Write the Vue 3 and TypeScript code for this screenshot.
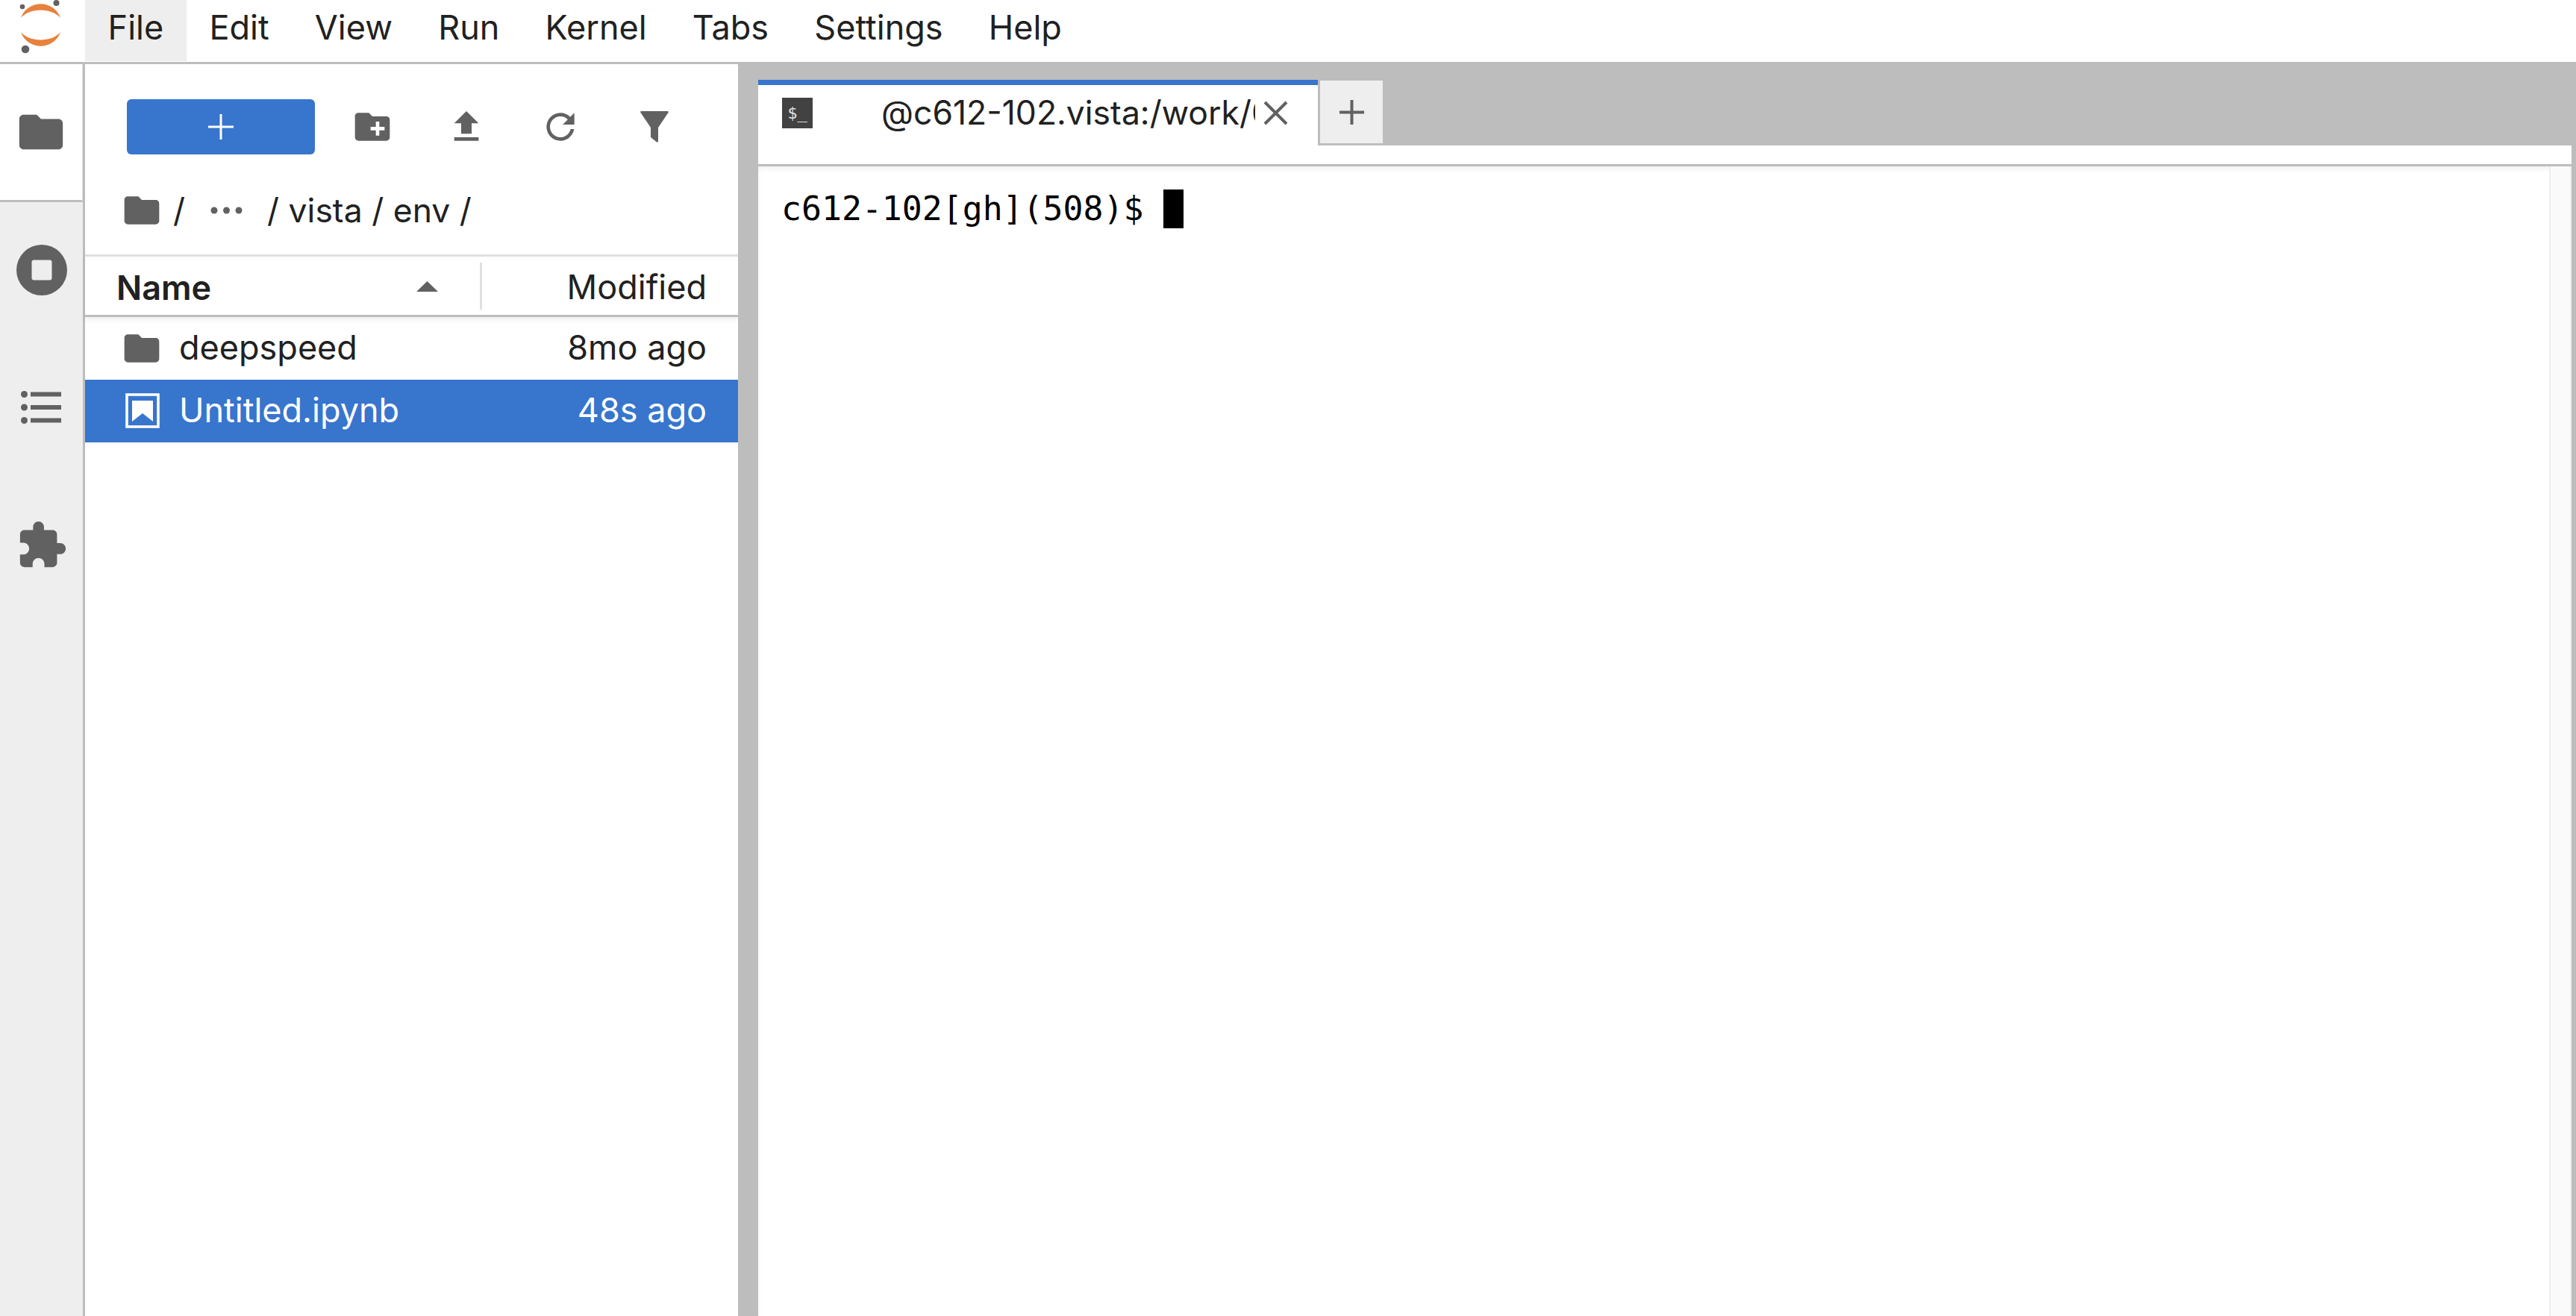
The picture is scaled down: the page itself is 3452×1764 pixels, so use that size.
<script setup lang="ts">
const menus: string[] = ['File', 'Edit', 'View', 'Run', 'Kernel', 'Tabs', 'Settings', 'Help']
const folderPath = 'M10 4H4c-1.100 0-2 .9-2 2v12c0 1.100.9 2 2 2h16c1.100 0 2-.9 2-2V8c0-1.100-.9-2-2-2h-8l-2-2z'
</script>

<template>
  <div class="app">
    <header class="topbar">
      <div class="logo">
        <svg width="64" height="76" viewBox="0 0 64 76">
          <circle cx="7" cy="9" r="3.300" fill="#616161" />
          <circle cx="52.500" cy="4" r="4" fill="#616161" />
          <circle cx="11" cy="66" r="5.300" fill="#616161" />
          <path d="M5 24C14-1 49-1 58 24 46 10 17 10 5 24Z" fill="#e8813c" />
          <path d="M5 43C14 68 49 68 58 43 46 57 17 57 5 43Z" fill="#e8813c" />
        </svg>
      </div>
      <nav class="menu">
        <div v-for="(m, i) in menus" :key="m" class="menu-item" :class="{ active: i === 0 }">{{ m }}</div>
      </nav>
    </header>

    <div class="main">
      <aside class="rail">
        <div class="rail-tab current">
          <svg width="70" height="70" viewBox="0 0 24 24"><path :d="folderPath" fill="#616161" /></svg>
        </div>
        <div class="rail-tab stop">
          <svg width="68" height="68" viewBox="0 0 68 68">
            <circle cx="34" cy="34" r="34" fill="#616161" />
            <rect x="20.500" y="20.500" width="27" height="27" rx="3" fill="#eeeeee" />
          </svg>
        </div>
        <div class="rail-tab">
          <svg width="56" height="44" viewBox="0 0 56 44">
            <circle cx="4.500" cy="4.500" r="4.500" fill="#616161" /><rect x="13" y="1.500" width="41" height="6" fill="#616161" />
            <circle cx="4.500" cy="22" r="4.500" fill="#616161" /><rect x="13" y="19" width="41" height="6" fill="#616161" />
            <circle cx="4.500" cy="39.500" r="4.500" fill="#616161" /><rect x="13" y="36.500" width="41" height="6" fill="#616161" />
          </svg>
        </div>
        <div class="rail-tab puzzle">
          <svg width="70" height="70" viewBox="0 0 24 24"><path d="M20.500 11H19V7c0-1.100-.9-2-2-2h-4V3.500C13 2.120 11.880 1 10.500 1S8 2.120 8 3.500V5H4c-1.100 0-1.990.9-1.990 2v3.800H3.500c1.490 0 2.700 1.210 2.700 2.700s-1.210 2.700-2.700 2.700H2V20c0 1.100.9 2 2 2h3.800v-1.500c0-1.490 1.210-2.700 2.700-2.700 1.490 0 2.700 1.210 2.700 2.700V22H17c1.100 0 2-.9 2-2v-4h1.500c1.380 0 2.500-1.120 2.500-2.500S21.880 11 20.500 11z" fill="#616161" /></svg>
        </div>
      </aside>

      <section class="browser">
        <div class="toolbar">
          <div class="new-btn">
            <svg width="34" height="34" viewBox="0 0 34 34"><path d="M15.500 0h3v15.500H34v3H18.500V34h-3V18.500H0v-3h15.500z" fill="#fff" /></svg>
          </div>
          <div class="tools">
            <svg width="56" height="56" viewBox="0 0 24 24"><path d="M20 6h-8l-2-2H4c-1.110 0-2 .89-2 2v12c0 1.110.89 2 2 2h16c1.110 0 2-.89 2-2V8c0-1.110-.89-2-2-2zm-1 8h-3v3h-2v-3h-3v-2h3V9h2v3h3v2z" fill="#616161" /></svg>
            <svg width="56" height="56" viewBox="0 0 24 24"><path d="M9 16h6v-6h4l-7-7-7 7h4zm-4 2h14v2H5z" fill="#616161" /></svg>
            <svg width="56" height="56" viewBox="0 0 18 18"><path d="M9 13.500c-2.490 0-4.500-2.010-4.500-4.500S6.510 4.500 9 4.500c1.240 0 2.360.52 3.170 1.330L10 8h5V3l-1.760 1.760C12.150 3.680 10.660 3 9 3 5.690 3 3.010 5.690 3.010 9S5.690 15 9 15c2.970 0 5.430-2.160 5.910-5h-1.520c-.46 2-2.240 3.500-4.390 3.500z" fill="#616161" /></svg>
            <svg width="56" height="56" viewBox="-9 -7 56 56"><path d="M1.500 0H36.500Q38.500 0 37.500 2L24 22V40Q24 43 21.500 41L14 35V22L.5 2Q-.5 0 1.500 0Z" fill="#616161" /></svg>
          </div>
        </div>

        <div class="crumbs">
          <svg width="56" height="56" viewBox="0 0 24 24"><path :d="folderPath" fill="#616161" /></svg>
          <span class="crumb first">/</span>
          <svg class="dots" width="44" height="10" viewBox="0 0 44 10">
            <circle cx="5" cy="5" r="4.500" fill="#616161" /><circle cx="21.500" cy="5" r="4.500" fill="#616161" /><circle cx="38" cy="5" r="4.500" fill="#616161" />
          </svg>
          <span class="crumb">/ vista / env /</span>
        </div>

        <div class="list-head">
          <div class="col-name">
            <span>Name</span>
            <svg width="29" height="14" viewBox="0 0 29 14"><path d="M14.500 0 29 14H0z" fill="#616161" /></svg>
          </div>
          <div class="col-mod">Modified</div>
        </div>

        <div class="row">
          <svg width="56" height="56" viewBox="0 0 24 24"><path :d="folderPath" fill="#616161" /></svg>
          <span class="fname">deepspeed</span>
          <span class="when">8mo ago</span>
        </div>
        <div class="row selected">
          <svg width="56" height="56" viewBox="0 0 56 56">
            <rect x="8" y="6" width="42" height="43" fill="none" stroke="#fff" stroke-width="3.600" />
            <path d="M15 14H43V42L29 31 15 42Z" fill="#fff" />
          </svg>
          <span class="fname">Untitled.ipynb</span>
          <span class="when">48s ago</span>
        </div>
      </section>

      <section class="dock">
        <div class="tabbar">
          <div class="tab">
            <div class="term-icon">$_</div>
            <span class="tab-title">@c612-102.vista:/work/09</span>
            <svg class="tab-close" width="33" height="33" viewBox="0 0 33 33"><path d="M2 2 31 31M31 2 2 31" stroke="#616161" stroke-width="4" fill="none" /></svg>
          </div>
          <div class="add-tab">
            <svg width="33" height="33" viewBox="0 0 33 33"><path d="M14.500 0h4v14.500H33v4H18.500V33h-4V18.500H0v-4h14.500z" fill="#616161" /></svg>
          </div>
        </div>
        <div class="strip"></div>
        <div class="terminal">
          <div class="term-body">
            <span class="prompt">c612-102[gh](508)$ </span><span class="cursor"></span>
          </div>
          <div class="scrollbar"></div>
        </div>
      </section>
    </div>
  </div>
</template>

<style>
html, body { margin: 0; padding: 0; background: #fff; overflow: hidden; }
</style>

<style scoped>
.app {
  width: 3452px;
  height: 1764px;
  display: flex;
  flex-direction: column;
  font-family: Inter, "Liberation Sans", sans-serif;
  color: #212121;
  overflow: hidden;
}
.topbar {
  height: 83px;
  flex: none;
  display: flex;
  background: #fff;
  border-bottom: 3px solid #bdbdbd;
}
.logo {
  width: 114px;
  flex: none;
  padding-left: 23px;
  box-sizing: border-box;
}
.menu { display: flex; }
.menu-item {
  height: 82px;
  padding: 0 30.600px 9px;
  box-sizing: border-box;
  display: flex;
  align-items: center;
  font-size: 45px;
}
.menu-item.active { background: #eeeeee; }

.main { flex: 1; min-height: 0; display: flex; }
.rail {
  width: 114px;
  flex: none;
  box-sizing: border-box;
  background: #eeeeee;
  border-right: 3px solid #bdbdbd;
  display: flex;
  flex-direction: column;
}
.rail-tab {
  height: 184px;
  flex: none;
  display: flex;
  align-items: center;
  justify-content: center;
}
.rail-tab.current {
  height: 185px;
  width: 111px;
  box-sizing: border-box;
  background: #fff;
  border-bottom: 3px solid #bdbdbd;
  border-right: 1px solid #e0e0e0;
}
.rail-tab.stop { margin-top: -1px; }
.rail-tab.puzzle { padding-top: 2px; box-sizing: border-box; }

.browser {
  width: 875px;
  flex: none;
  background: #fff;
  display: flex;
  flex-direction: column;
}
.toolbar {
  height: 137px;
  flex: none;
  box-sizing: border-box;
  display: flex;
  align-items: flex-start;
  padding: 47px 0 0 56px;
}
.new-btn {
  width: 252px;
  height: 74px;
  background: #3875cd;
  border-radius: 6px;
  display: flex;
  align-items: center;
  justify-content: center;
}
.tools {
  display: flex;
  gap: 70px;
  margin-left: 49px;
  height: 74px;
  align-items: center;
}
.crumbs {
  height: 118px;
  flex: none;
  display: flex;
  align-items: center;
  padding-left: 48px;
  font-size: 44.500px;
  box-sizing: border-box;
}
.crumb.first { margin-left: 14px; }
.dots { margin: 0 32px 0 34px; }
.list-head {
  height: 84px;
  flex: none;
  display: flex;
  box-sizing: border-box;
  border-top: 3px solid #e0e0e0;
  border-bottom: 3px solid #bdbdbd;
  box-shadow: 0 4px 6px rgba(0, 0, 0, 0.06);
  font-size: 45px;
}
.col-name {
  width: 532px;
  box-sizing: border-box;
  display: flex;
  align-items: center;
  justify-content: space-between;
  padding: 0 56px 0 42px;
  font-weight: 600;
  margin: 8px 0 7px;
  border-right: 3px solid #e0e0e0;
}
.col-name span { padding-top: 3px; }
.col-mod {
  flex: 1;
  display: flex;
  align-items: center;
  justify-content: flex-end;
  padding: 3px 42px 0 0;
}
.row {
  height: 84px;
  flex: none;
  display: flex;
  align-items: center;
  padding: 0 42px 0 48px;
  font-size: 45px;
}
.row svg { flex: none; }
.fname { margin-left: 22px; flex: 1; padding-bottom: 3px; }
.when { padding-bottom: 3px; }
.row.selected { background: #3875cd; color: #fff; }

.dock {
  flex: 1;
  min-width: 0;
  background: #bdbdbd;
  display: flex;
  flex-direction: column;
  padding-right: 6px;
}
.tabbar {
  height: 88px;
  flex: none;
  display: flex;
  align-items: flex-start;
  padding: 21px 0 0 27px;
  position: relative;
}
.tab {
  width: 750px;
  height: 113px;
  flex: none;
  box-sizing: border-box;
  border-top: 7px solid #3875cd;
  background: #fff;
  display: flex;
  align-items: flex-start;
  position: relative;
  z-index: 1;
  padding: 17px 0 0 32px;
  font-size: 44.500px;
  line-height: 41px;
}
.term-icon {
  width: 41px;
  height: 41px;
  flex: none;
  background: #424242;
  color: #e0e0e0;
  font-family: "DejaVu Sans Mono", monospace;
  font-size: 22px;
  display: flex;
  align-items: center;
  justify-content: center;
}
.tab-title {
  width: 501px;
  margin-left: 92px;
  white-space: nowrap;
  overflow: hidden;
  flex: none;
  height: 56px;
}
.tab-close { margin-left: 11px; margin-top: 4px; flex: none; }
.add-tab {
  width: 84px;
  height: 84px;
  flex: none;
  margin: 1px 0 0 3px;
  background: #eeeeee;
  display: flex;
  align-items: center;
  justify-content: center;
}
.strip {
  height: 25px;
  flex: none;
  margin-left: 27px;
  background: #fff;
  border-bottom: 3px solid #bdbdbd;
}
.terminal {
  flex: 1;
  min-height: 0;
  margin-left: 27px;
  background: #fff;
  display: flex;
  box-shadow: inset 0 4px 6px rgba(0, 0, 0, 0.05);
}
.term-body {
  flex: 1;
  padding: 30px 0 0 31px;
  font-family: "DejaVu Sans Mono", monospace;
  font-size: 44.800px;
  color: #000;
  line-height: 54px;
  display: flex;
  align-items: flex-start;
  white-space: pre;
}
.cursor {
  display: block;
  width: 27px;
  height: 52px;
  background: #000;
  margin-top: 1px;
}
.scrollbar {
  width: 30px;
  box-sizing: border-box;
  flex: none;
  background: #fafafa;
  border-left: 2px solid #eeeeee;
  border-right: 2px solid #eeeeee;
}
</style>
